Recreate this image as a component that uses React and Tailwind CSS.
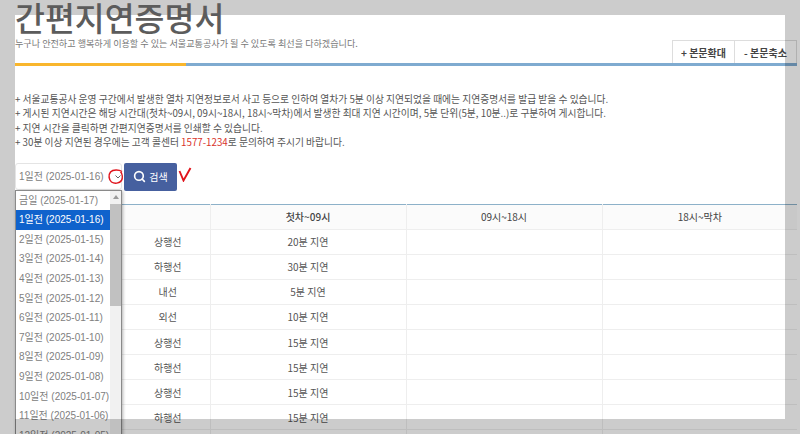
import React from 'react';
import { Search } from 'lucide-react';

const KR = "font-['Noto_Sans_CJK_KR','Noto_Sans',sans-serif]";

const notes = [
  '+ 서울교통공사 운영 구간에서 발생한 열차 지연정보로서 사고 등으로 인하여 열차가 5분 이상 지연되었을 때에는 지연증명서를 발급 받을 수 있습니다.',
  '+ 게시된 지연시간은 해당 시간대(첫차~09시, 09시~18시, 18시~막차)에서 발생한 최대 지연 시간이며, 5분 단위(5분, 10분..)로 구분하여 게시합니다.',
  '+ 지연 시간을 클릭하면 간편지연증명서를 인쇄할 수 있습니다.',
];

const options = [
  '금일 (2025-01-17)',
  '1일전 (2025-01-16)',
  '2일전 (2025-01-15)',
  '3일전 (2025-01-14)',
  '4일전 (2025-01-13)',
  '5일전 (2025-01-12)',
  '6일전 (2025-01-11)',
  '7일전 (2025-01-10)',
  '8일전 (2025-01-09)',
  '9일전 (2025-01-08)',
  '10일전 (2025-01-07)',
  '11일전 (2025-01-06)',
  '12일전 (2025-01-05)',
];

const rows = [
  ['상행선', '20분 지연'],
  ['하행선', '30분 지연'],
  ['내선', '5분 지연'],
  ['외선', '10분 지연'],
  ['상행선', '15분 지연'],
  ['하행선', '15분 지연'],
  ['상행선', '15분 지연'],
  ['하행선', '15분 지연'],
  ['', ''],
];

const DateDropdown = () => (
  <div className="absolute left-0 top-[27px] w-[107px] h-[260px] bg-white border border-[#8a8a8a] shadow-[1px_1px_3px_rgba(0,0,0,0.3)] flex overflow-hidden z-10">
    <ul className="flex-1 min-w-0 font-['Liberation_Sans','Noto_Sans_CJK_KR',sans-serif]">
      {options.map((o, i) => (
        <li
          key={o}
          className={`h-[19.6px] leading-[19.6px] pl-[3px] text-[10px] whitespace-nowrap ${i === 1 ? 'bg-[#0f62cc] text-white' : 'text-[#808080]'}`}
        >
          {o}
        </li>
      ))}
    </ul>
    <div className="w-[11px] bg-[#f1f1f1] shrink-0 flex flex-col">
      <div className="h-[13px] flex items-center justify-center">
        <div className="w-0 h-0 border-x-[3px] border-x-transparent border-b-[4px] border-b-[#9a9a9a]" />
      </div>
      <div className="h-[102px] bg-[#c1c1c1]" />
    </div>
  </div>
);

const App = () => {
  return (
    <div className={`relative w-[800px] h-[434px] overflow-hidden bg-white ${KR}`}>
      <div className="pl-[15px] pr-[3px]">
        <h1 className="relative z-30 h-[37px] text-[32.5px] leading-[33px] font-medium text-[#5c5c5c]">간편지연증명서</h1>

        <div className="flex justify-between h-[26px] relative">
          <p className="text-[9.1px] leading-[13px] text-[#777]">누구나 안전하고 행복하게 이용할 수 있는 서울교통공사가 될 수 있도록 최선을 다하겠습니다.</p>
          <div className="flex items-stretch h-[23px] mt-[3px] text-[10px] font-semibold text-[#444]">
            <button className="w-[63px] border border-b-0 border-[#ddd]">+ 본문확대</button>
            <button className="w-[62px] border border-l-0 border-b-0 border-[#ddd]">- 본문축소</button>
          </div>
        </div>

        <div className="flex h-[3px]">
          <div className="w-[171px] bg-[#f9b62d]" />
          <div className="flex-1 bg-[#7fabd0]" />
        </div>

        <div className="mt-[26px] text-[9.75px] leading-[14.4px] text-[#555]">
          {notes.map((n) => (
            <p key={n} className="whitespace-nowrap">{n}</p>
          ))}
          <p>+ 30분 이상 지연된 경우에는 고객 콜센터 <span className="text-[#d9332a]">1577-1234</span>로 문의하여 주시기 바랍니다.</p>
        </div>

        <div className="relative mt-[13px] flex items-center gap-[2px] h-[28px]">
          <div className="relative w-[107px] h-[27px] bg-white border border-[#e4e4e4] rounded-[3px] flex items-center pl-[3px] text-[10px] text-[#808080] font-['Liberation_Sans','Noto_Sans_CJK_KR',sans-serif] whitespace-nowrap">
            1일전 (2025-01-16)
            <svg className="absolute left-[91px] top-[4px]" width="18" height="18" viewBox="0 0 18 18" fill="none">
              <path d="M8.5 7.5l2.5 2.5 2.5-2.5" stroke="#666" strokeWidth="1" />
              <path d="M15 3.5C12 1.5 6 1.2 3.5 4 1 7 2 12 4.5 14c3 2 8 1.5 10-1.5 1.3-2.5 1-6.5-1-9" stroke="#e0141c" strokeWidth="1.5" />
            </svg>
          </div>
          <button className="w-[53px] h-[28px] bg-[#46609f] rounded-[2px] text-white text-[10px] flex items-center justify-center gap-[3px]">
            <Search size={13} strokeWidth={3} />
            검색
          </button>
          <svg width="14" height="15" viewBox="0 0 14 15" fill="none" className="-ml-[1px] -mt-[4px]">
            <path d="M1.5 4l4 9.5L12.5 1" stroke="#e0141c" strokeWidth="1.9" />
          </svg>
          <DateDropdown />
        </div>

        <table className="mt-[13px] w-full table-fixed border-collapse border-t border-t-[#8db1c9] text-[10px] text-[#555]">
          <colgroup>
            <col className="w-[111px]" />
            <col className="w-[84px]" />
            <col className="w-[196px]" />
            <col className="w-[196px]" />
            <col />
          </colgroup>
          <thead>
            <tr className="h-[25px] bg-[#fbfbfb] border-b border-[#eee]">
              <th className="font-normal" />
              <th className="font-normal border-r border-[#eee]" />
              <th className="font-medium text-[#444] border-r border-[#eee]">첫차~09시</th>
              <th className="font-normal text-[#444] border-r border-[#eee]">09시~18시</th>
              <th className="font-normal text-[#444]">18시~막차</th>
            </tr>
          </thead>
          <tbody>
            {rows.map((r, i) => (
              <tr key={i} className="h-[25.1px] border-b border-[#eee]">
                <td />
                <td className="text-center border-r border-[#eee]">{r[0]}</td>
                <td className="text-center border-r border-[#eee]">{r[1]}</td>
                <td className="border-r border-[#eee]" />
                <td />
              </tr>
            ))}
          </tbody>
        </table>
      </div>

      {/* grey crop frame over the page */}
      <div className="absolute left-0 top-0 w-full h-[15px] bg-black/20 z-20" />
      <div className="absolute left-0 top-[419px] w-full h-[15px] bg-black/20 z-20" />
      <div className="absolute left-0 top-[15px] w-[15px] h-[404px] bg-black/20 z-20" />
      <div className="absolute left-[785px] top-[15px] w-[15px] h-[404px] bg-black/20 z-20" />
    </div>
  );
};

export default App;
